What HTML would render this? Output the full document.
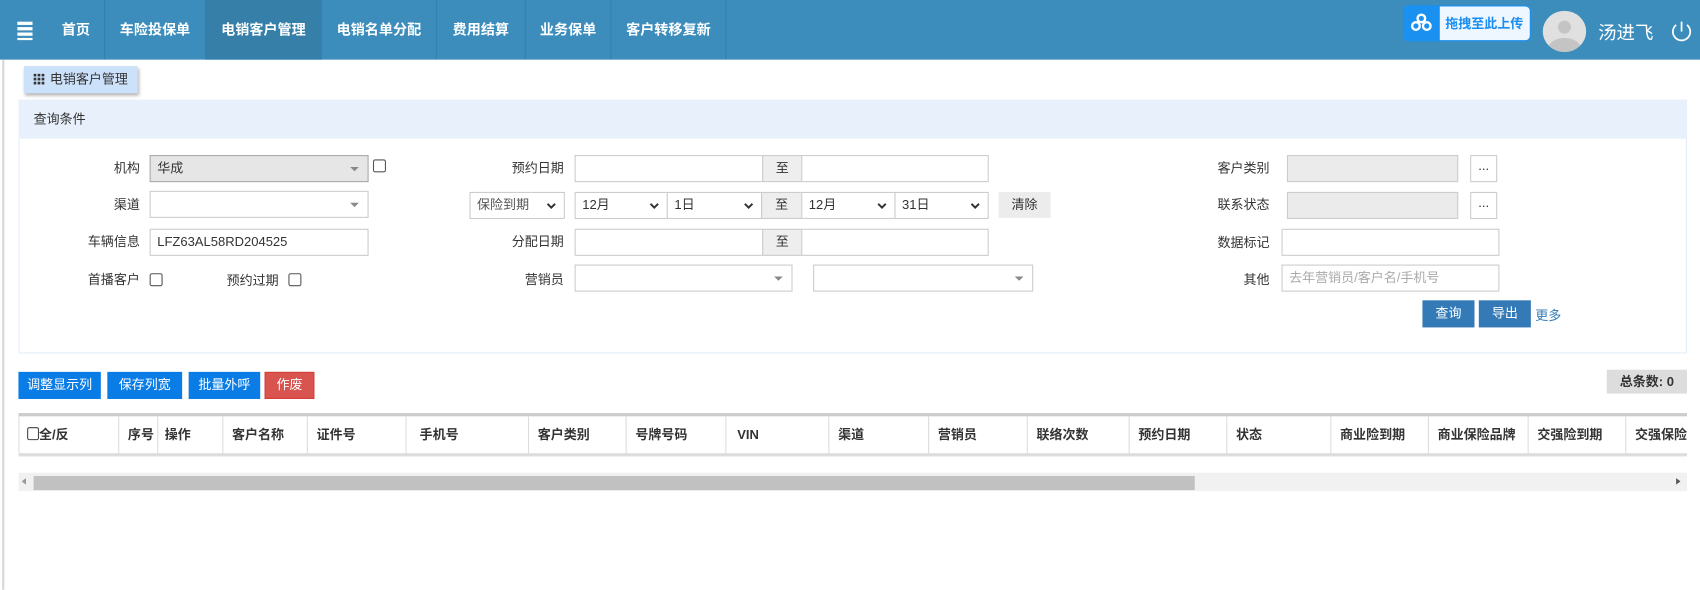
<!DOCTYPE html>
<html><head><meta charset="utf-8"><style>
*{box-sizing:border-box;margin:0;padding:0}
body{width:1700px;height:544px;overflow:hidden;background:#fff;font-family:"Liberation Sans","Noto Sans CJK SC",sans-serif;font-size:12px;color:#333;position:relative}
#w{position:absolute;left:0;top:0;width:1568px;height:502px;transform:scale(1.08418);transform-origin:0 0}
.a{position:absolute}
.nav{left:0;top:0;width:1568px;height:55px;background:#3c8dbc}
.ni{top:0;height:55px;line-height:55px;color:#fff;font-weight:bold;font-size:13px;text-align:center;border-right:1px solid #3580ad}
.lbl{text-align:right;line-height:24px;height:24px;font-size:12px}
.inp{height:25px;border:1px solid #ccc;background:#fff;line-height:23px;padding-left:6px;font-size:12px}
.gray{background:#ebebeb}
.zhi{height:25px;border:1px solid #ccc;background:#eee;text-align:center;line-height:23px}
.sel:after{content:"";position:absolute;right:8px;top:10px;border:4px solid transparent;border-top-color:#888}
.cv{position:absolute;right:7px;top:9px}
.cb{width:12px;height:12px;border:1px solid #555;border-radius:2px;background:#fff}
.btn{height:25px;line-height:25px;color:#fff;text-align:center;font-size:12px}
.th{top:384px;height:34px;line-height:34px;border-right:1px solid #ddd;font-weight:bold;padding-left:8px;font-size:12px;color:#333}
</style></head><body><div id="w">
<div class="a nav"></div>
<div class="a" style="left:16px;top:20px;width:14px;height:3px;background:#fff"></div>
<div class="a" style="left:16px;top:25px;width:14px;height:3px;background:#fff"></div>
<div class="a" style="left:16px;top:30px;width:14px;height:3px;background:#fff"></div>
<div class="a" style="left:16px;top:35px;width:14px;height:2px;background:#fff"></div>
<div class="a ni" style="left:44px;width:53px">首页</div>
<div class="a ni" style="left:97px;width:93px">车险投保单</div>
<div class="a ni" style="left:190px;width:107px;background:#367fa9">电销客户管理</div>
<div class="a ni" style="left:297px;width:106px">电销名单分配</div>
<div class="a ni" style="left:403px;width:82px">费用结算</div>
<div class="a ni" style="left:485px;width:79px">业务保单</div>
<div class="a ni" style="left:564px;width:106px">客户转移复新</div>
<div class="a" style="left:1294px;top:5px;width:118px;height:33px;border-radius:5px;background:#eef6ff;border:1px solid #1a90f0"></div>
<div class="a" style="left:1294px;top:5px;width:34px;height:33px;border-radius:5px 0 0 5px;background:#1a90f0"></div>
<svg class="a" style="left:1301px;top:12px" width="20" height="18" viewBox="0 0 20 18"><circle cx="10" cy="5" r="3.5" fill="none" stroke="#fff" stroke-width="2.2"/><circle cx="5" cy="12" r="3.5" fill="none" stroke="#fff" stroke-width="2.2"/><circle cx="15" cy="12" r="3.5" fill="none" stroke="#fff" stroke-width="2.2"/></svg>
<div class="a" style="left:1333px;top:13px;font-size:12px;font-weight:bold;color:#1a8ef0">拖拽至此上传</div>
<div class="a" style="left:1423px;top:10px;width:40px;height:38px;border-radius:50%;background:#e0e0e0;overflow:hidden"><div class="a" style="left:14px;top:9px;width:12px;height:12px;border-radius:50%;background:#c4c4c4"></div><div class="a" style="left:5px;top:25px;width:30px;height:20px;border-radius:50%;background:#c4c4c4"></div></div>
<div class="a" style="left:1474px;top:16px;font-size:17px;color:#fff">汤进飞</div>
<svg class="a" style="left:1540px;top:18px" width="22" height="22" viewBox="0 0 22 22"><path d="M6 5 A8 8 0 1 0 16 5" fill="none" stroke="#fff" stroke-width="1.6"/><path d="M11 2 V11" stroke="#fff" stroke-width="1.6"/></svg>
<div class="a" style="left:2px;top:55px;width:2px;height:489px;background:#d8d8d8"></div>
<div class="a" style="left:22px;top:61px;width:105px;height:25px;background:#cce2fa;box-shadow:1px 2px 3px rgba(0,0,0,.3);line-height:25px;padding-left:24px;font-size:12px">电销客户管理</div>
<svg class="a" style="left:31px;top:68px" width="10" height="10"><g fill="#333"><rect x="0" y="0" width="2.5" height="2.5"/><rect x="3.7" y="0" width="2.5" height="2.5"/><rect x="7.4" y="0" width="2.5" height="2.5"/><rect x="0" y="3.7" width="2.5" height="2.5"/><rect x="3.7" y="3.7" width="2.5" height="2.5"/><rect x="7.4" y="3.7" width="2.5" height="2.5"/><rect x="0" y="7.4" width="2.5" height="2.5"/><rect x="3.7" y="7.4" width="2.5" height="2.5"/><rect x="7.4" y="7.4" width="2.5" height="2.5"/></g></svg>
<div class="a" style="left:17px;top:92px;width:1539px;height:234px;border:1px solid #e3edf8"></div>
<div class="a" style="left:17px;top:92px;width:1539px;height:36px;background:#e8f1fb;line-height:36px;padding-left:14px">查询条件</div>
<!-- row1 -->
<div class="a lbl" style="left:60px;top:143px;width:69px">机构</div>
<div class="a inp gray sel" style="left:138px;top:143px;width:202px;background:#e6e6e6;border-color:#aaa">华成</div>
<div class="a cb" style="left:344px;top:147px"></div>
<div class="a lbl" style="left:440px;top:143px;width:80px">预约日期</div>
<div class="a inp" style="left:530px;top:143px;width:174px"></div>
<div class="a zhi" style="left:703px;top:143px;width:37px">至</div>
<div class="a inp" style="left:739px;top:143px;width:173px"></div>
<div class="a lbl" style="left:1100px;top:143px;width:71px">客户类别</div>
<div class="a inp gray" style="left:1187px;top:143px;width:158px"></div>
<div class="a inp" style="left:1356px;top:143px;width:25px;padding:0;text-align:center;line-height:18px">...</div>
<!-- row2 -->
<div class="a lbl" style="left:60px;top:177px;width:69px">渠道</div>
<div class="a inp sel" style="left:138px;top:176px;width:202px"></div>
<div class="a inp" style="left:433px;top:177px;width:88px;color:#555">保险到期<svg class="cv" width="9" height="6"><path d="M1 1 L4.5 4.5 L8 1" fill="none" stroke="#333" stroke-width="1.8"/></svg></div>
<div class="a inp" style="left:530px;top:177px;width:86px">12月<svg class="cv" width="9" height="6"><path d="M1 1 L4.5 4.5 L8 1" fill="none" stroke="#333" stroke-width="1.8"/></svg></div>
<div class="a inp" style="left:615px;top:177px;width:88px">1日<svg class="cv" width="9" height="6"><path d="M1 1 L4.5 4.5 L8 1" fill="none" stroke="#333" stroke-width="1.8"/></svg></div>
<div class="a zhi" style="left:702px;top:177px;width:38px">至</div>
<div class="a inp" style="left:739px;top:177px;width:87px">12月<svg class="cv" width="9" height="6"><path d="M1 1 L4.5 4.5 L8 1" fill="none" stroke="#333" stroke-width="1.8"/></svg></div>
<div class="a inp" style="left:825px;top:177px;width:87px">31日<svg class="cv" width="9" height="6"><path d="M1 1 L4.5 4.5 L8 1" fill="none" stroke="#333" stroke-width="1.8"/></svg></div>
<div class="a" style="left:921px;top:177px;width:48px;height:24px;background:#ececec;text-align:center;line-height:24px">清除</div>
<div class="a lbl" style="left:1100px;top:177px;width:71px">联系状态</div>
<div class="a inp gray" style="left:1187px;top:177px;width:158px"></div>
<div class="a inp" style="left:1356px;top:177px;width:25px;padding:0;text-align:center;line-height:18px">...</div>
<!-- row3 -->
<div class="a lbl" style="left:60px;top:211px;width:69px">车辆信息</div>
<div class="a inp" style="left:138px;top:211px;width:202px">LFZ63AL58RD204525</div>
<div class="a lbl" style="left:440px;top:211px;width:80px">分配日期</div>
<div class="a inp" style="left:530px;top:211px;width:174px"></div>
<div class="a zhi" style="left:703px;top:211px;width:37px">至</div>
<div class="a inp" style="left:739px;top:211px;width:173px"></div>
<div class="a lbl" style="left:1100px;top:212px;width:71px">数据标记</div>
<div class="a inp" style="left:1182px;top:211px;width:201px"></div>
<!-- row4 -->
<div class="a lbl" style="left:60px;top:246px;width:69px">首播客户</div>
<div class="a cb" style="left:138px;top:252px"></div>
<div class="a lbl" style="left:200px;top:247px;width:57px">预约过期</div>
<div class="a cb" style="left:266px;top:252px"></div>
<div class="a lbl" style="left:440px;top:246px;width:80px">营销员</div>
<div class="a inp sel" style="left:530px;top:244px;width:201px"></div>
<div class="a inp sel" style="left:750px;top:244px;width:203px"></div>
<div class="a lbl" style="left:1100px;top:246px;width:71px">其他</div>
<div class="a inp" style="left:1182px;top:244px;width:201px;color:#aaa">去年营销员/客户名/手机号</div>
<div class="a btn" style="left:1312px;top:277px;width:48px;background:#337ab7">查询</div>
<div class="a btn" style="left:1364px;top:277px;width:48px;background:#337ab7">导出</div>
<div class="a" style="left:1416px;top:282px;color:#337ab7">更多</div>
<!-- buttons -->
<div class="a btn" style="left:17px;top:343px;width:76px;background:#0a7ce6">调整显示列</div>
<div class="a btn" style="left:99px;top:343px;width:69px;background:#0a7ce6">保存列宽</div>
<div class="a btn" style="left:174px;top:343px;width:66px;background:#0a7ce6">批量外呼</div>
<div class="a btn" style="left:244px;top:343px;width:46px;background:#d9534f;border:1px solid #d43f3a;line-height:23px">作废</div>
<div class="a" style="left:1482px;top:341px;width:74px;height:22px;background:#ddd;font-weight:bold;text-align:center;line-height:22px">总条数: 0</div>
<!-- table -->
<div class="a" style="left:17px;top:381px;width:1539px;height:3px;background:#ccc"></div>
<div class="a" style="left:17px;top:418px;width:1539px;height:3px;background:#ddd"></div>
<div class="a" style="left:17px;top:384px;width:1px;height:34px;background:#ddd"></div>
<div class="a th" style="left:17px;width:93px;padding-left:8px"><span style="display:inline-block;width:11px;height:12px;border:1px solid #444;border-radius:2px;vertical-align:-1px"></span>全/反</div>
<div class="a th" style="left:110px;width:36px">序号</div>
<div class="a th" style="left:146px;width:60px;padding-left:6px">操作</div>
<div class="a th" style="left:206px;width:78px">客户名称</div>
<div class="a th" style="left:284px;width:91px">证件号</div>
<div class="a th" style="left:375px;width:113px;padding-left:12px">手机号</div>
<div class="a th" style="left:488px;width:90px">客户类别</div>
<div class="a th" style="left:578px;width:92px">号牌号码</div>
<div class="a th" style="left:670px;width:95px;padding-left:10px">VIN</div>
<div class="a th" style="left:765px;width:92px">渠道</div>
<div class="a th" style="left:857px;width:91px">营销员</div>
<div class="a th" style="left:948px;width:94px">联络次数</div>
<div class="a th" style="left:1042px;width:90px">预约日期</div>
<div class="a th" style="left:1132px;width:96px">状态</div>
<div class="a th" style="left:1228px;width:90px">商业险到期</div>
<div class="a th" style="left:1318px;width:92px">商业保险品牌</div>
<div class="a th" style="left:1410px;width:90px">交强险到期</div>
<div class="a th" style="left:1500px;width:56px;border:none;overflow:hidden;white-space:nowrap">交强保险</div>
<div class="a" style="left:17px;top:436px;width:1539px;height:17px;background:#f1f1f1"></div>
<div class="a" style="left:31px;top:439px;width:1071px;height:13px;background:#c1c1c1"></div>
<div class="a" style="left:1546px;top:441px;border:3px solid transparent;border-left:4px solid #555;border-right:none"></div>
<div class="a" style="left:20px;top:441px;border:3px solid transparent;border-right:4px solid #999;border-left:none"></div>
</div></body></html>
